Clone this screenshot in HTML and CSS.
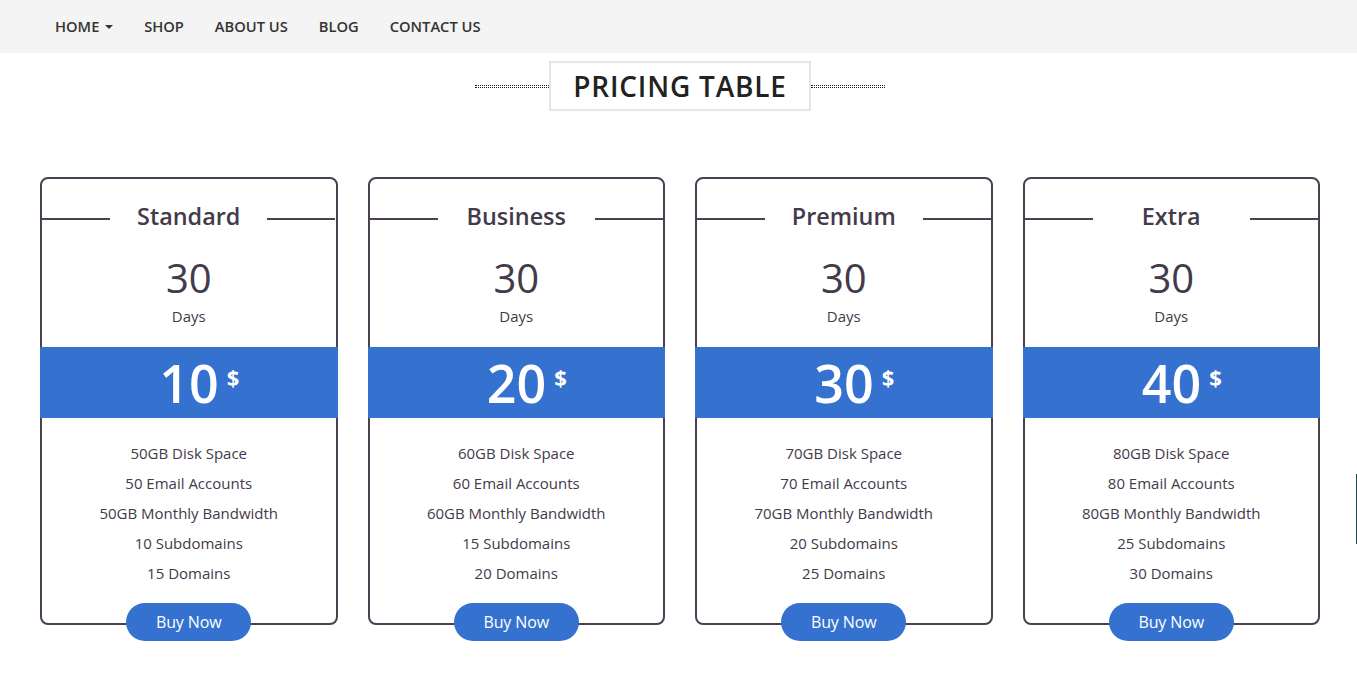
FILE: index.html
```html
<!DOCTYPE html>
<html lang="en">
<head>
<meta charset="utf-8">
<title>Pricing Table</title>
<link rel="stylesheet" href="styles.css">
</head>
<body>
<nav class="navbar">
  <ul class="nav">
    <li><a href="#">HOME <span class="caret"></span></a></li>
    <li><a href="#">SHOP</a></li>
    <li><a href="#">ABOUT US</a></li>
    <li><a href="#">BLOG</a></li>
    <li><a href="#">CONTACT US</a></li>
  </ul>
</nav>

<div class="title-row">
  <span class="dots"></span>
  <h1 class="title">PRICING TABLE</h1>
  <span class="dots"></span>
</div>

<main class="plans">
  <div class="card">
    <div class="card-head"><span class="line"></span><h3>Standard</h3><span class="line"></span></div>
    <div class="days-num">30</div>
    <div class="days">Days</div>
    <div class="price">10<sup>$</sup></div>
    <ul class="features">
      <li>50GB Disk Space</li>
      <li>50 Email Accounts</li>
      <li>50GB Monthly Bandwidth</li>
      <li>10 Subdomains</li>
      <li>15 Domains</li>
    </ul>
    <a class="buy" href="#">Buy Now</a>
  </div>
  <div class="card">
    <div class="card-head"><span class="line"></span><h3>Business</h3><span class="line"></span></div>
    <div class="days-num">30</div>
    <div class="days">Days</div>
    <div class="price">20<sup>$</sup></div>
    <ul class="features">
      <li>60GB Disk Space</li>
      <li>60 Email Accounts</li>
      <li>60GB Monthly Bandwidth</li>
      <li>15 Subdomains</li>
      <li>20 Domains</li>
    </ul>
    <a class="buy" href="#">Buy Now</a>
  </div>
  <div class="card">
    <div class="card-head"><span class="line"></span><h3>Premium</h3><span class="line"></span></div>
    <div class="days-num">30</div>
    <div class="days">Days</div>
    <div class="price">30<sup>$</sup></div>
    <ul class="features">
      <li>70GB Disk Space</li>
      <li>70 Email Accounts</li>
      <li>70GB Monthly Bandwidth</li>
      <li>20 Subdomains</li>
      <li>25 Domains</li>
    </ul>
    <a class="buy" href="#">Buy Now</a>
  </div>
  <div class="card">
    <div class="card-head"><span class="line"></span><h3>Extra</h3><span class="line"></span></div>
    <div class="days-num">30</div>
    <div class="days">Days</div>
    <div class="price">40<sup>$</sup></div>
    <ul class="features">
      <li>80GB Disk Space</li>
      <li>80 Email Accounts</li>
      <li>80GB Monthly Bandwidth</li>
      <li>25 Subdomains</li>
      <li>30 Domains</li>
    </ul>
    <a class="buy" href="#">Buy Now</a>
  </div>
</main>
<span class="edge-mark"></span>
</body>
</html>
```

FILE: styles.css
```css
* { box-sizing: border-box; }

html, body {
  margin: 0;
  padding: 0;
  background: #fff;
}

body {
  font-family: "Open Sans", "Liberation Sans", sans-serif;
  color: #433a4a;
  position: relative;
  min-height: 675px;
}

.navbar {
  background: #f4f4f4;
  height: 53px;
  padding-left: 40px;
}

.nav {
  list-style: none;
  margin: 0;
  padding: 0;
  display: flex;
  height: 53px;
  align-items: center;
}

.nav a {
  display: block;
  padding: 0 15.5px;
  font-size: 14.7px;
  font-weight: 600;
  color: #333;
  text-decoration: none;
  line-height: 53px;
}

.nav li:first-child a {
  padding-left: 15px;
}

.caret {
  display: inline-block;
  width: 0;
  height: 0;
  border-left: 4px solid transparent;
  border-right: 4px solid transparent;
  border-top: 4px solid #333;
  vertical-align: middle;
  margin-left: 2px;
  margin-top: -2px;
}

.title-row {
  display: flex;
  justify-content: center;
  align-items: center;
  margin-top: 8px;
  padding-left: 3px;
}

.dots {
  width: 74px;
  height: 3px;
  border-top: 1px dotted #222;
  border-bottom: 1px dotted #222;
}

.title {
  margin: 0;
  height: 50px;
  width: 262px;
  border: 2px solid #e6e6e6;
  font-size: 28px;
  font-weight: 600;
  color: #222;
  line-height: 46px;
  text-align: center;
  letter-spacing: 0.8px;
}

.plans {
  display: grid;
  grid-template-columns: repeat(4, 1fr);
  column-gap: 30px;
  padding: 0 37px 0 40px;
  margin-top: 66px;
}

.card {
  border: 2px solid #4a4050;
  border-radius: 8px;
  padding-top: 22px;
  display: flex;
  flex-direction: column;
  align-items: center;
  text-align: center;
}

.card-head {
  align-self: stretch;
  display: flex;
  justify-content: space-between;
  align-items: center;
  height: 30px;
}

.card-head .line {
  width: 68px;
  height: 2px;
  background: #4a4050;
  margin-top: 5px;
}

.card-head h3 {
  margin: 0;
  font-size: 23.4px;
  font-weight: 600;
  line-height: 30px;
  color: #433a4a;
}

.days-num {
  margin-top: 23px;
  font-size: 40px;
  line-height: 48px;
  color: #433a4a;
}

.days {
  margin-top: 4px;
  font-size: 15px;
  line-height: 20px;
}

.price {
  align-self: stretch;
  margin: 21px -2px 0;
  height: 71px;
  background: #3572cf;
  color: #fff;
  font-size: 52px;
  font-weight: 600;
  line-height: 71px;
  padding-left: 21px;
}

.price sup {
  font-size: 22px;
  font-weight: 700;
  vertical-align: top;
  position: relative;
  top: -5px;
  margin-left: 8px;
}

.features {
  list-style: none;
  margin: 0;
  padding: 20px 0 0;
  font-size: 15px;
  line-height: 30px;
}

.buy {
  margin-top: 15px;
  margin-bottom: -18px;
  width: 125px;
  height: 38px;
  border-radius: 19px;
  background: #3572cf;
  color: #fff;
  text-decoration: none;
  font-size: 16px;
  font-weight: 500;
  line-height: 38px;
  letter-spacing: -0.1px;
}

.edge-mark {
  position: absolute;
  right: 0;
  top: 474px;
  width: 1px;
  height: 70px;
  background: #2c4a4e;
}
```
